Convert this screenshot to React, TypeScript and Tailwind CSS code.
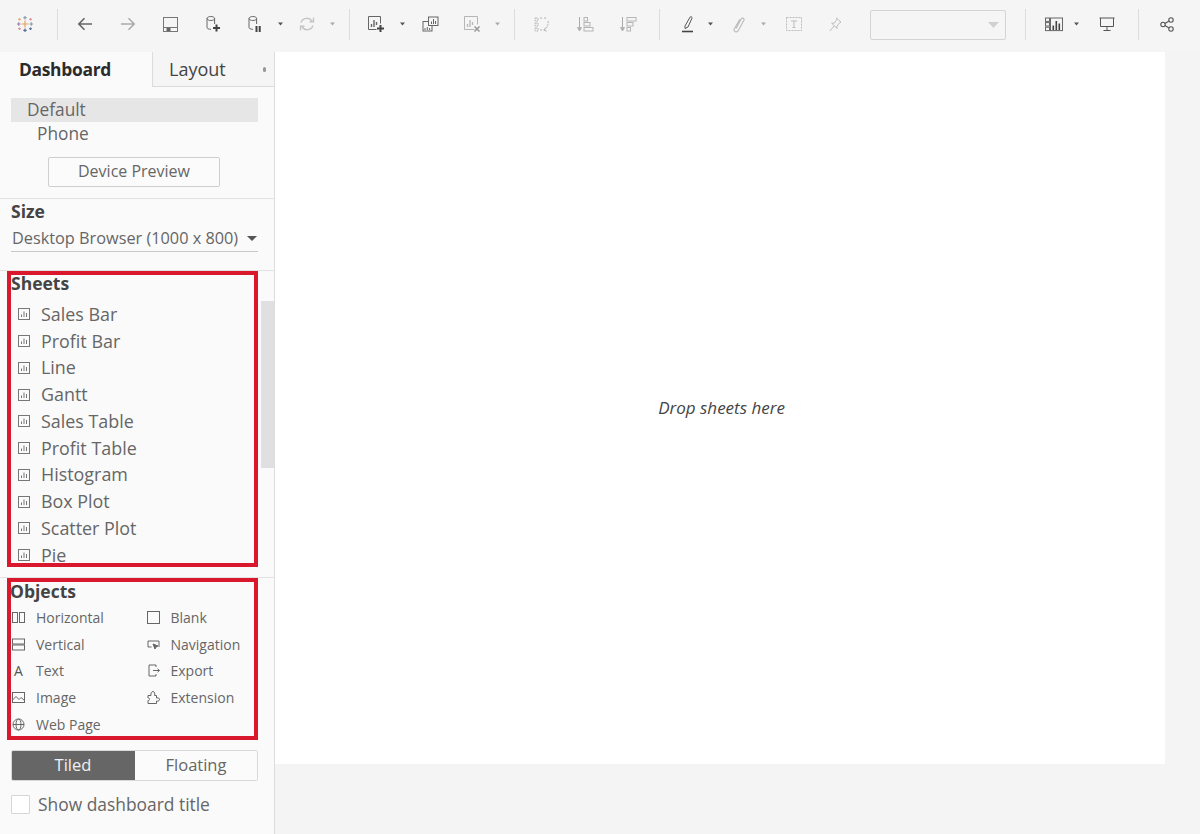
import React from "react";

type P = { children?: React.ReactNode; c?: string; s?: number; w?: number; h?: number };
const Ic = ({ children, c = "#666", s = 1, w = 20, h = 20 }: P) => (
  <svg width={w} height={h} viewBox={`0 0 ${w} ${h}`} fill="none" stroke={c} strokeWidth={s}>{children}</svg>
);
const Slot = ({ w, children }: { w: string; children?: React.ReactNode }) => (
  <div className={`${w} h-[48px] flex items-center justify-center shrink-0`}>{children}</div>
);
const Sep = () => <div className="w-px h-[31px] bg-[#dcdcdc]" />;
const Caret = ({ c = "#555" }: { c?: string }) => (
  <svg width="6" height="4" viewBox="0 0 6 4"><path d="M0 0.5h5L2.5 3.5z" fill={c} /></svg>
);
const L = "#b5b5b5";

const Logo = () => (
  <svg width="18" height="18" viewBox="0 0 18 18" strokeWidth="1.2" fill="none" opacity="0.75">
    <path d="M9 5.5v7M5.5 9h7" stroke="#e8862c" />
    <path d="M9 1v3.5M7.3 2.7h3.4" stroke="#5b879b" />
    <path d="M9 13.5V17M7.3 15.3h3.4" stroke="#1f447d" />
    <path d="M1 9h3.5M2.7 7.3v3.4" stroke="#7a5a8c" />
    <path d="M13.5 9H17M15.3 7.3v3.4" stroke="#59879b" />
    <path d="M3.5 3v2.6M2.2 4.3h2.6" stroke="#eb912b" />
    <path d="M14.5 3v2.6M13.2 4.3h2.6" stroke="#d9707e" />
    <path d="M3.5 12.4V15M2.2 13.7h2.6" stroke="#d9707e" />
    <path d="M14.5 12.4V15M13.2 13.7h2.6" stroke="#1f447d" />
  </svg>
);

const SheetIcon = () => (
  <svg width="12" height="12" viewBox="0 0 12 12" fill="none" stroke="#777" strokeWidth="1">
    <rect x="0.5" y="0.5" width="11" height="11" />
    <path d="M3.5 9V6.5M6 9V3.5M8.5 9V5" />
  </svg>
);

const sheets = ["Sales Bar", "Profit Bar", "Line", "Gantt", "Sales Table", "Profit Table", "Histogram", "Box Plot", "Scatter Plot", "Pie"];

const O = ({ icon, label }: { icon: React.ReactNode; label: string }) => (
  <div className="h-[26.75px] flex items-center">
    <div className="w-[13px] h-[13px] flex items-center justify-center shrink-0">{icon}</div>
    <span className="ml-[11px] text-[14px] text-[#666] whitespace-nowrap">{label}</span>
  </div>
);
const oi = (d: React.ReactNode) => (
  <svg width="13" height="13" viewBox="0 0 13 13" fill="none" stroke="#666" strokeWidth="1">{d}</svg>
);

export default function App() {
  return (
    <div className="w-[1200px] h-[834px] overflow-hidden bg-[#f4f4f4] font-['Open_Sans',sans-serif]">
      {/* toolbar */}
      <div className="h-[52px] flex items-start bg-[#f5f5f5]">
        <Slot w="w-[50px]"><Logo /></Slot>
        <Slot w="w-[14px]"><Sep /></Slot>
        <Slot w="w-[42px]">
          <Ic c="#666" s={1.6}><path d="M17 10H4M9.5 4.2 3.8 10l5.7 5.8" /></Ic>
        </Slot>
        <Slot w="w-[44px]">
          <Ic c="#aaa" s={1.5}><path d="M3 10h13M10.5 4.2 16.2 10l-5.7 5.8" /></Ic>
        </Slot>
        <Slot w="w-[40px]">
          <Ic w={15} h={15} c="#777"><rect x="0.5" y="0.5" width="14" height="14" /><path d="M1 10.5h13" /><rect x="3.5" y="11" width="4" height="3" fill="#666" stroke="none" /></Ic>
        </Slot>
        <Slot w="w-[46px]">
          <Ic w={16} h={18} c="#666"><path d="M2 3.5v9c0 1 1.5 1.8 4 1.8M2 3.5C2 2.3 3.8 1.5 5.8 1.5s3.8.8 3.8 2V9M2 3.5c0 1.2 1.8 2 3.8 2s3.8-.8 3.8-2" /><path d="M11.5 9.5v7M8 13h7" strokeWidth="2" stroke="#444" /></Ic>
        </Slot>
        <Slot w="w-[38px]">
          <Ic w={16} h={18} c="#666"><path d="M2 3.5v9c0 1 1.5 1.8 4 1.8M2 3.5C2 2.3 3.8 1.5 5.8 1.5s3.8.8 3.8 2V9M2 3.5c0 1.2 1.8 2 3.8 2s3.8-.8 3.8-2" /><path d="M9.5 11v6M12.7 11v6" strokeWidth="2" stroke="#444" /></Ic>
        </Slot>
        <Slot w="w-[14px]"><Caret /></Slot>
        <Slot w="w-[38px]">
          <Ic w={16} h={16} c="#c4c4c4" s={1.4}><path d="M2 6.5a6.2 6.2 0 0 1 11-1.5M14 9.5a6.2 6.2 0 0 1-11 1.5" /><path d="M14.5 1.8v4h-4M1.5 14.2v-4h4" /></Ic>
        </Slot>
        <Slot w="w-[14px]"><Caret c="#aaa" /></Slot>
        <Slot w="w-[18px]"><Sep /></Slot>
        <Slot w="w-[36px]">
          <Ic w={18} h={18} c="#666"><path d="M13.5 1.5h-12v13h8" /><path d="M13.5 1.5v7" /><path d="M4.5 12V9M7 12V5M9.5 10V7" strokeWidth="1.4" /><path d="M13.5 10v7M10 13.5h7" strokeWidth="2" stroke="#444" /></Ic>
        </Slot>
        <Slot w="w-[17px]"><Caret /></Slot>
        <Slot w="w-[38px]">
          <Ic w={17} h={16} c="#666"><rect x="1" y="5.5" width="9" height="9.5" fill="#f5f5f5" /><rect x="6.5" y="1" width="9.5" height="8.5" fill="#f5f5f5" /><path d="M3 14v-2M5.3 14v-3M7.6 14v-2M9.5 8V5.5M11.5 8V3M13.5 8V5" /></Ic>
        </Slot>
        <Slot w="w-[46px]">
          <Ic w={18} h={18} c={L}><path d="M11.5 14.5h-10v-13h13v8" /><path d="M4.5 12V9M7 12V5M9.5 10V7" strokeWidth="1.3" /><path d="M11.5 11.5l5 5M16.5 11.5l-5 5" strokeWidth="1.6" stroke="#999" /></Ic>
        </Slot>
        <Slot w="w-[6px]"><Caret c="#aaa" /></Slot>
        <Slot w="w-[26px]"><Sep /></Slot>
        <Slot w="w-[30px]">
          <Ic w={16} h={17} c={L}><path d="M1 2h3v3H1zM6 2h2M10 2h3M1 7h3v3H1zM1 12h3v3H1zM6 14h3M14 5c.8 3.5-.8 7-4 9" strokeDasharray="2 0.8" /><path d="M12 11.5l-2.3 2.6 3 1.1" /></Ic>
        </Slot>
        <Slot w="w-[56px]">
          <Ic w={18} h={17} c={L}><path d="M3.5 1v12" stroke="#aaa" /><path d="M1.5 11.5 3.5 15l2-3.5z" fill="#aaa" /><rect x="8" y="1.5" width="3.5" height="3.5" /><rect x="8" y="6.5" width="6" height="3.5" /><rect x="8" y="11.5" width="9" height="3.5" /></Ic>
        </Slot>
        <Slot w="w-[30px]">
          <Ic w={18} h={17} c={L}><path d="M3.5 1v12" stroke="#aaa" /><path d="M1.5 11.5 3.5 15l2-3.5z" fill="#aaa" /><rect x="8" y="1.5" width="9" height="3.5" /><rect x="8" y="6.5" width="6" height="3.5" /><rect x="8" y="11.5" width="3.5" height="3.5" /></Ic>
        </Slot>
        <Slot w="w-[32px]"><Sep /></Slot>
        <Slot w="w-[26px]">
          <Ic w={14} h={18} c="#555"><path d="M4 11 9 2.2c.6-1 2.5-.2 2 1L7 12l-3 1.5z" /><path d="M1 16.5h11" strokeWidth="1.6" stroke="#444" /></Ic>
        </Slot>
        <Slot w="w-[20px]"><Caret /></Slot>
        <Slot w="w-[36px]">
          <Ic w={14} h={17} c="#bbb" s={1.1}><path d="M4 12.5 9.2 3c1-1.8 3.6-.5 2.7 1.3L6.3 14.6c-1.5 2.6-5.2.8-3.9-1.9L7.8 3.3" /></Ic>
        </Slot>
        <Slot w="w-[14px]"><Caret c="#aaa" /></Slot>
        <Slot w="w-[46px]">
          <Ic w={16} h={14} c="#bbb"><rect x="0.5" y="0.5" width="15" height="13" strokeDasharray="2 1" /><path d="M5 4h6M8 4v6.5M6.5 10.5h3" /></Ic>
        </Slot>
        <Slot w="w-[36px]">
          <Ic w={13} h={15} c="#bbb"><path d="M7.5 1 12 5.2l-1.5.6-2.6 3.4.2 2.3L2.7 6.2l2.6-.1 2.5-3.5zM5 9l-4 5" /></Ic>
        </Slot>
        <div className="w-[17px]" />
        <div className="w-[136px] h-[30px] mt-[10px] border border-[#d4d4d4] rounded-[2px] flex items-center justify-end pr-[6px] shrink-0">
          <svg width="11" height="6" viewBox="0 0 11 6"><path d="M0 0h11L5.5 6z" fill="#d0d0d0" /></svg>
        </div>
        <Slot w="w-[38px]"><Sep /></Slot>
        <Slot w="w-[20px]">
          <Ic w={18} h={15} c="#666"><rect x="0.5" y="1" width="4" height="3.4" /><rect x="0.5" y="5.6" width="4" height="3.4" /><rect x="0.5" y="10.2" width="4" height="3.4" /><rect x="5.5" y="1" width="12" height="12.6" /><path d="M8.3 13V8.5M11.3 13V4M14.3 13V6.5" strokeWidth="1.6" stroke="#444" /></Ic>
        </Slot>
        <Slot w="w-[26px]"><Caret /></Slot>
        <Slot w="w-[34px]">
          <Ic w={16} h={15} c="#555"><path d="M.5 1h15M1.5 1v8.5h13V1M8 9.5v4M4.5 13.5h7" /></Ic>
        </Slot>
        <Slot w="w-[28px]"><Sep /></Slot>
        <Slot w="w-[30px]">
          <Ic w={14} h={15} c="#555" s={1.1}><circle cx="3" cy="7.5" r="2.2" /><circle cx="11" cy="3" r="2.2" /><circle cx="11" cy="12" r="2.2" /><path d="M5 6.4l4-2.3M5 8.6l4 2.3" /></Ic>
        </Slot>
      </div>

      <div className="flex h-[782px]">
        {/* sidebar */}
        <div className="w-[275px] shrink-0 border-r border-[#dcdcdc] bg-[#fafafa] flex flex-col">
          <div className="flex h-[35px] shrink-0">
            <div className="w-[152px] pl-[19px] flex items-center text-[17.4px] font-bold text-[#2b2b2b] tracking-[-0.3px]">Dashboard</div>
            <div className="flex-1 border-l border-b border-[#dcdcdc] bg-[#f5f5f5] pl-[16px] pr-[8px] flex items-center justify-between">
              <span className="text-[18px] text-[#444]">Layout</span>
              <span className="w-[3px] h-[5px] rounded-full bg-[#999]" />
            </div>
          </div>
          <div className="h-[112px] shrink-0 border-b border-[#e2e2e2] pt-[11px] px-[11px]">
            <div className="w-[247px] h-[24px] bg-[#e6e6e6] pl-[16px] flex items-center text-[17.3px] text-[#666]">Default</div>
            <div className="h-[24px] pl-[26px] flex items-center text-[17.3px] text-[#666]">Phone</div>
            <div className="mt-[11px] ml-[37px] w-[172px] h-[30px] border border-[#cfcfcf] rounded-[2px] bg-[#fbfbfb] flex items-center justify-center text-[16px] text-[#666] pb-[2px]">Device Preview</div>
          </div>
          <div className="h-[72px] shrink-0 border-b border-[#e2e2e2] px-[11px]">
            <div className="h-[26px] flex items-center text-[17.5px] font-bold text-[#444] pb-[2px]">Size</div>
            <div className="w-[247px] h-[27px] border-b border-[#c8c8c8] flex items-center justify-between">
              <span className="text-[16.3px] text-[#666] ml-[1px] whitespace-nowrap">Desktop Browser (1000 x 800)</span>
              <svg width="10" height="5" viewBox="0 0 10 5" className="mr-px"><path d="M0 0h10L5 5z" fill="#555" /></svg>
            </div>
          </div>

          {/* sheets */}
          <div className="h-[307px] shrink-0 border-b border-[#e2e2e2] flex">
            <div className="ml-[7px] w-[251px] h-[296px] border-[4px] border-[#d9182d] overflow-hidden">
              <div className="h-[18px] flex items-center text-[17.5px] font-bold text-[#444] pb-[2px]">Sheets</div>
              <div className="mt-[8px]">
                {sheets.map((s) => (
                  <div key={s} className="h-[26.75px] flex items-center pl-[7px]">
                    <SheetIcon />
                    <span className="ml-[11px] text-[17.9px] text-[#666] whitespace-nowrap">{s}</span>
                  </div>
                ))}
              </div>
            </div>
            <div className="ml-[3px] flex-1 mt-[30px] h-[167px] bg-[#e0e0e2]" />
          </div>

          {/* objects */}
          <div className="ml-[7px] w-[251px] h-[162px] border-[4px] border-[#d9182d] shrink-0">
            <div className="h-[18px] -ml-px flex items-center text-[17.5px] font-bold text-[#444]">Objects</div>
            <div className="flex mt-[4px] pl-px">
              <div className="w-[134.5px]">
                <O label="Horizontal" icon={oi(<><rect x=".5" y="1.5" width="5" height="10" /><rect x="7.5" y="1.5" width="5" height="10" /></>)} />
                <O label="Vertical" icon={oi(<><rect x=".5" y="1" width="12" height="5" /><rect x=".5" y="7" width="12" height="5" /></>)} />
                <O label="Text" icon={<span className="text-[14px] text-[#555] leading-none">A</span>} />
                <O label="Image" icon={oi(<><rect x=".5" y="1.5" width="12" height="10" /><path d="M.5 9 4 5.5l3 3 2-2 3.5 3" /></>)} />
                <O label="Web Page" icon={oi(<><circle cx="6.5" cy="6.5" r="5.5" /><ellipse cx="6.5" cy="6.5" rx="2.5" ry="5.5" /><path d="M1 6.5h11" /></>)} />
              </div>
              <div>
                <O label="Blank" icon={oi(<rect x=".5" y=".5" width="12" height="12" />)} />
                <O label="Navigation" icon={oi(<><path d="M12 9V3H1v6h3.5" /><path d="M6 6l5 2-2 1-1 2z" fill="#666" /></>)} />
                <O label="Export" icon={oi(<><path d="M9 3V1H2v11h7v-2" /><path d="M6 6.5h6.5M10.5 4.8l2 1.7-2 1.7" /></>)} />
                <O label="Extension" icon={oi(<path d="M1 12.5V9.5c2 .5 2-3 0-2.5V4.5h3C3.5 2.5 4.5.5 6 .5S8.2 2.5 7.5 4.5h2V7c2-.5 3.5.5 3 1.8S11 10.3 9.5 10v2.5z" />)} />
              </div>
            </div>
          </div>

          {/* tiled */}
          <div className="mt-[10px] ml-[11px] w-[247px] h-[31px] flex border border-[#d8d8d8] rounded-[2px] shrink-0 overflow-hidden">
            <div className="w-[124px] -ml-px bg-[#666] text-[#f0f0f0] text-[16.5px] flex items-center justify-center">Tiled</div>
            <div className="flex-1 bg-[#fbfbfb] text-[#666] text-[16.5px] flex items-center justify-center">Floating</div>
          </div>
          <div className="mt-[14px] ml-[11px] h-[19px] flex items-center shrink-0">
            <div className="w-[19px] h-[19px] border border-[#d6d6d6] bg-white rounded-[1px]" />
            <span className="ml-[8px] text-[17.4px] text-[#666] whitespace-nowrap">Show dashboard title</span>
          </div>
        </div>

        {/* canvas */}
        <div className="w-[890px] h-[712px] bg-white flex items-center justify-center pl-[3px]">
          <span className="text-[17px] italic text-[#444]">Drop sheets here</span>
        </div>
      </div>
    </div>
  );
}
